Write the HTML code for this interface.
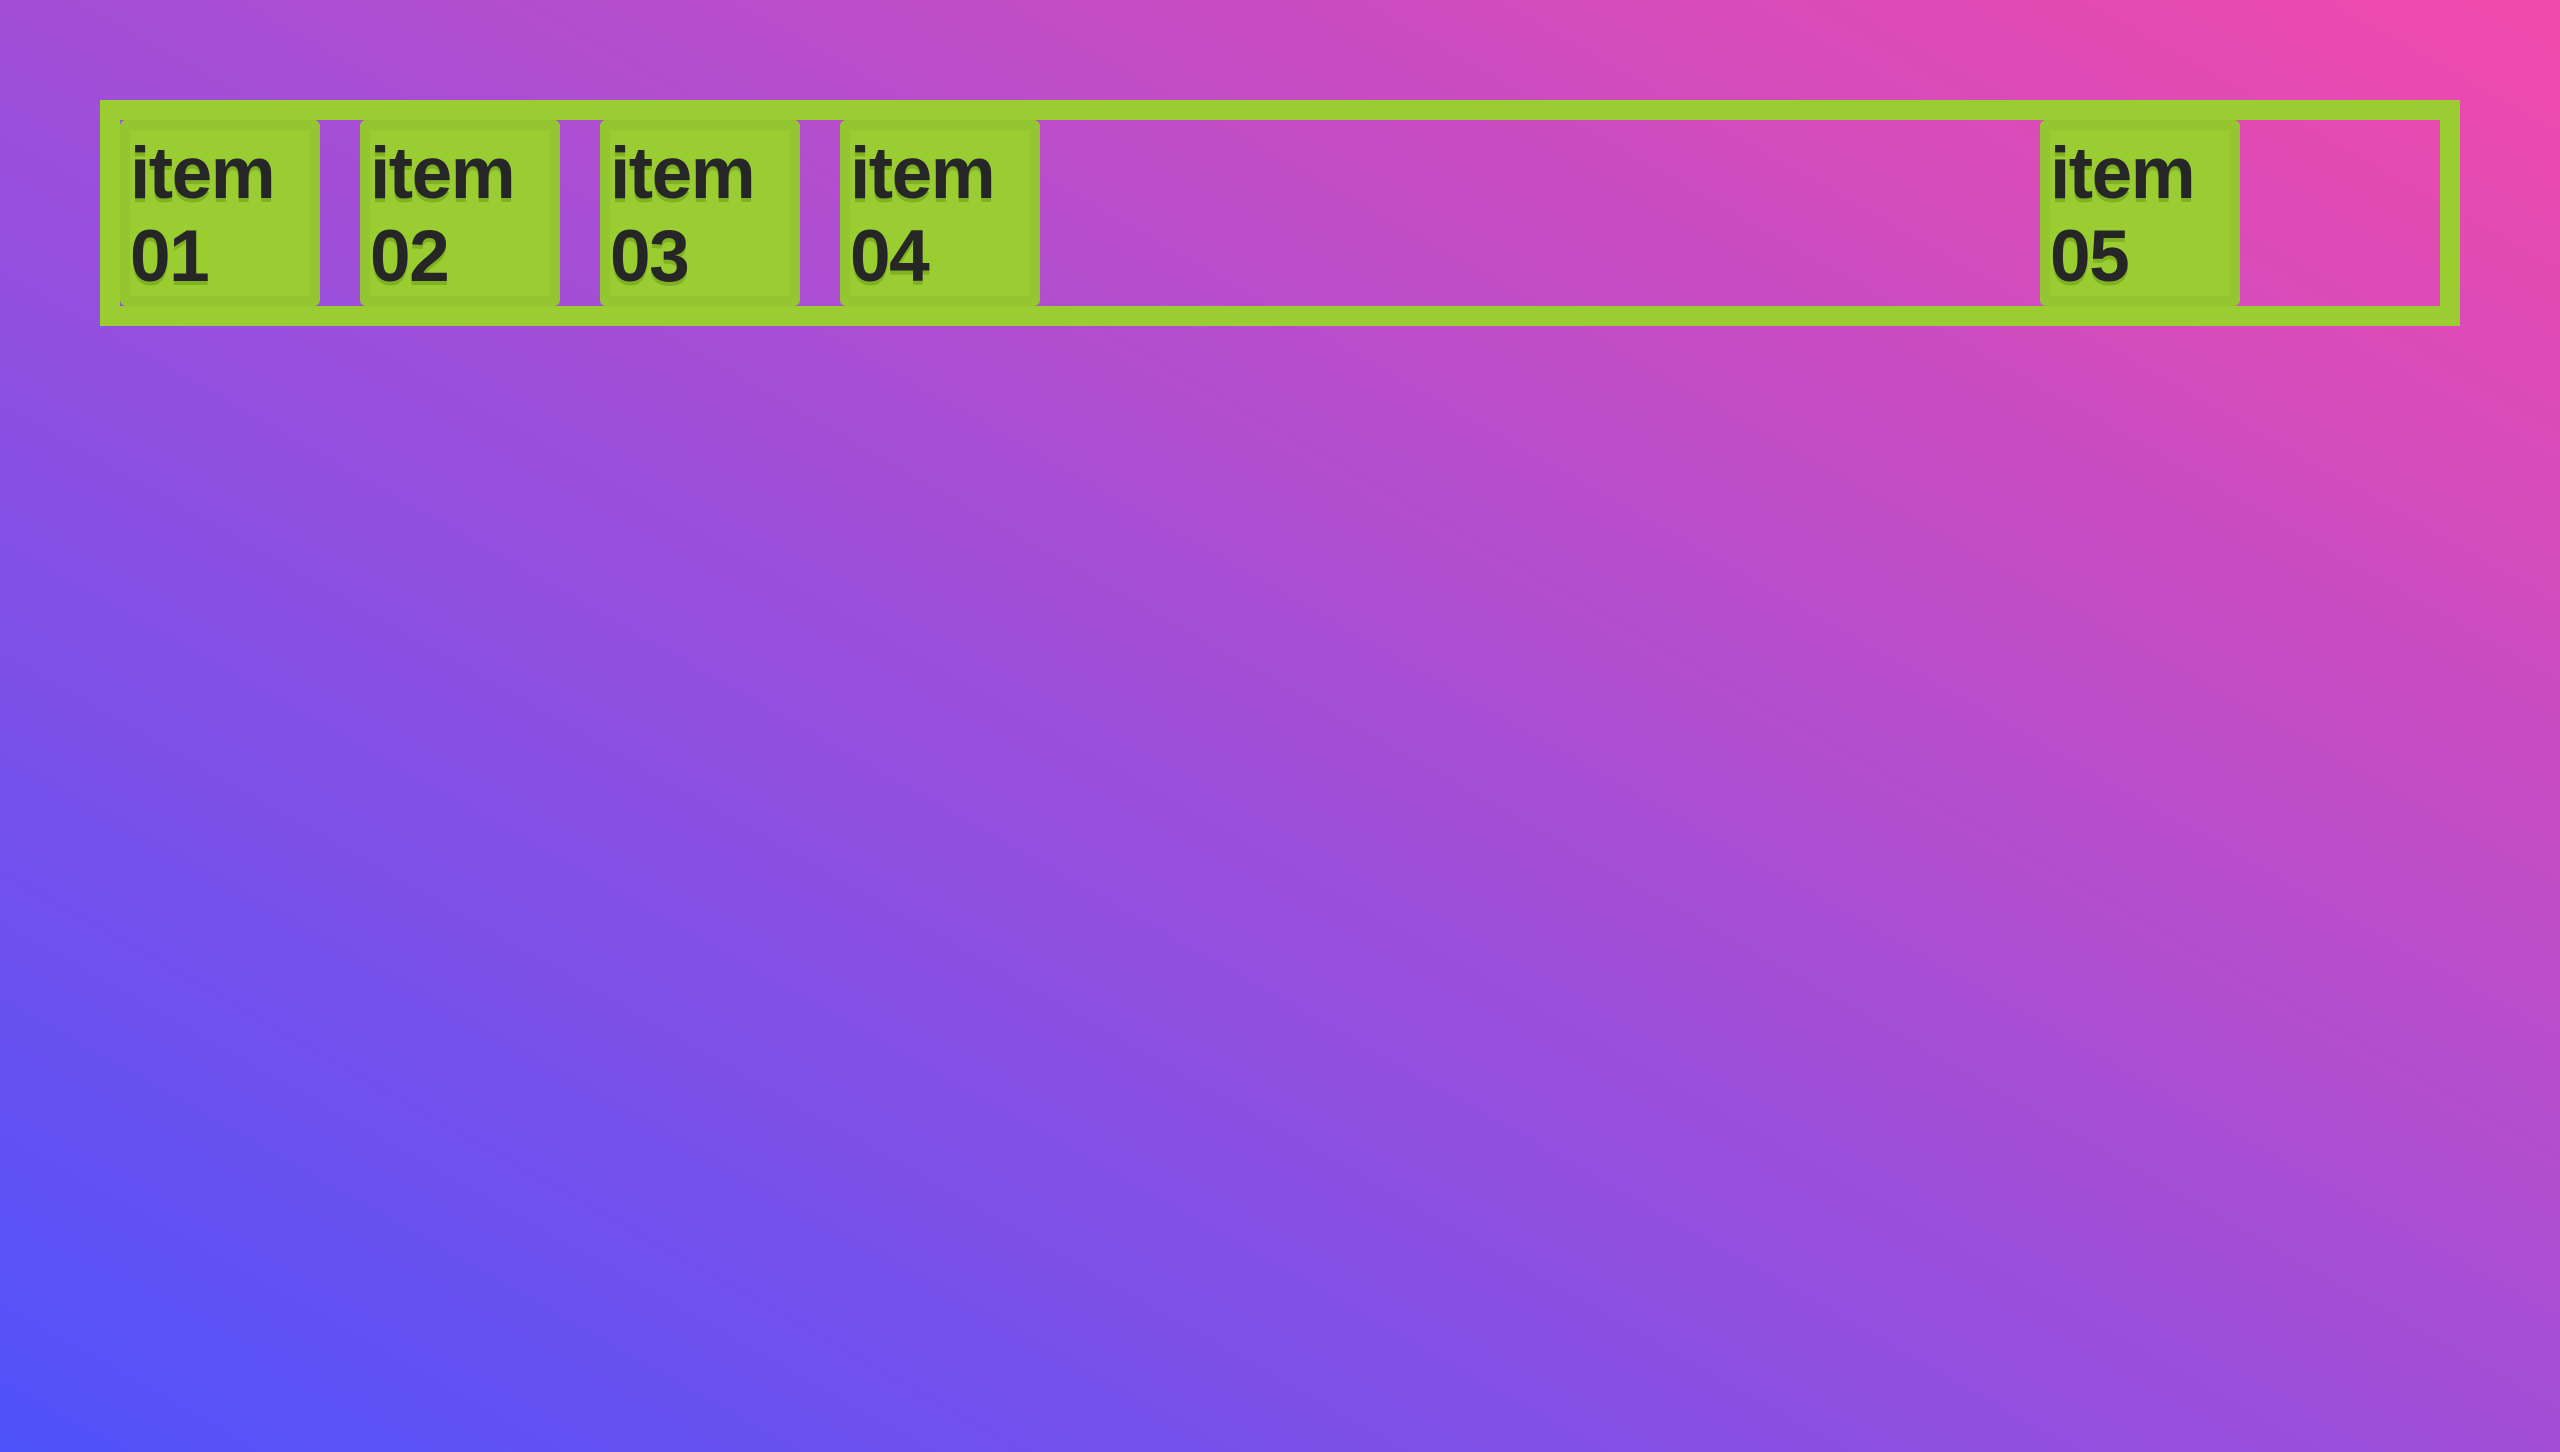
<!DOCTYPE html>
<html><head><meta charset="utf-8"><style>
html,body{margin:0;padding:0}
body{width:2560px;height:1452px;overflow:hidden;position:relative;
background:linear-gradient(to top right,#4f52fb 0%,#9a4fdc 45%,#f24aab 100%);
font-family:"Liberation Sans",sans-serif}
.wrap{position:absolute;left:100px;top:100px;width:2320px;height:186px;border:20px solid #9acd32}
.item{position:absolute;top:0;width:180px;height:166px;background:#9acd32;border:10px solid #93c631;border-radius:6px;box-sizing:content-box;
font-weight:bold;font-size:73px;line-height:83px;color:#262626;letter-spacing:-1.5px;text-shadow:0 4px 0 rgba(100,150,20,.5)}
.item span{position:absolute;left:0px;top:2px}
</style></head><body>
<div class="wrap">
<div class="item" style="left:0"><span>item<br>01</span></div>
<div class="item" style="left:240px"><span>item<br>02</span></div>
<div class="item" style="left:480px"><span>item<br>03</span></div>
<div class="item" style="left:720px"><span>item<br>04</span></div>
<div class="item" style="left:1920px"><span>item<br>05</span></div>
</div>
</body></html>
